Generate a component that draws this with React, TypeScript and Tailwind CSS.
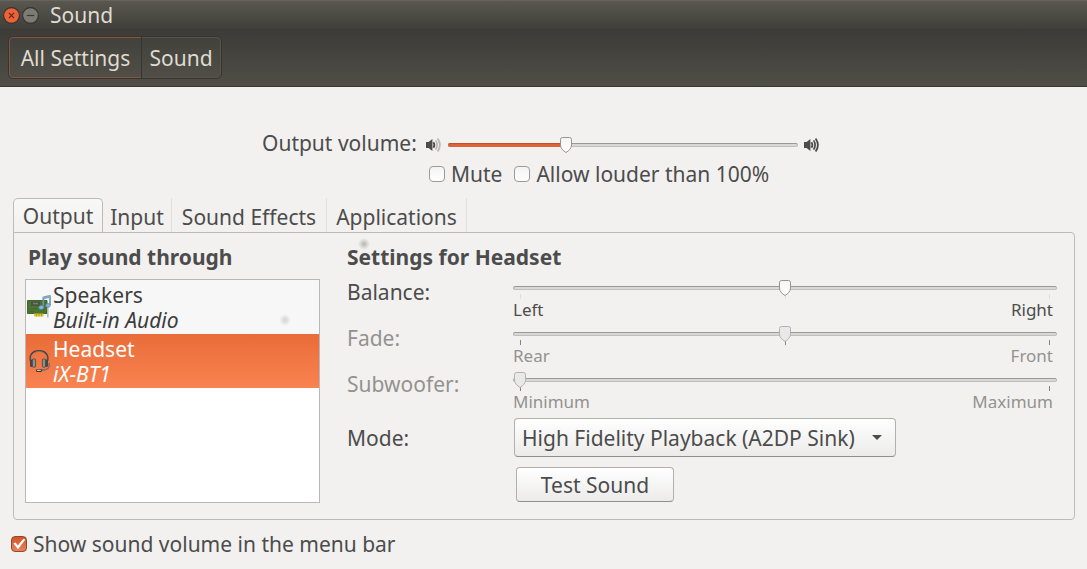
import { useState } from "react";
import type { ReactNode } from "react";

function Thumb({ disabled }: { disabled?: boolean }) {
  return (
    <svg width="14" height="18" viewBox="0 0 14 18" className="block">
      <defs>
        <linearGradient id="thumb-fill" x1="0" y1="0" x2="0" y2="1">
          <stop offset="0" stopColor="#f4f4f4" />
          <stop offset="1" stopColor="#ffffff" />
        </linearGradient>
      </defs>
      <path
        d="M3.5 1.5 H10.5 Q12.5 1.5 12.5 3.5 V9 C12.5 12.5 10 14.5 7 16.5 C4 14.5 1.5 12.5 1.5 9 V3.5 Q1.5 1.5 3.5 1.5 Z"
        fill={disabled ? "#e9e9e9" : "url(#thumb-fill)"}
        stroke={disabled ? "#b2b2b0" : "#939391"}
        strokeWidth="1"
      />
    </svg>
  );
}

type SliderProps = {
  label: string;
  initial: number;
  disabled?: boolean;
  filled?: boolean;
  ticks?: "light" | "dark";
  centerTick?: boolean;
};

function Slider({ label, initial, disabled, filled, ticks, centerTick }: SliderProps) {
  const [value, setValue] = useState(initial);
  const tick = ticks === "dark" ? "bg-[#85857f]" : "bg-[#dededc]";
  return (
    <div className="relative flex h-5 w-full items-center">
      <div className="h-[4px] w-full overflow-hidden rounded-full border border-t-[#999997] border-r-[#b5b5b3] border-b-[#bfbfbd] border-l-[#aaaaa8] bg-[#d8d8d6]" />
      <div className="absolute inset-x-[7px] inset-y-0">
        {filled && (
          <div
            className="absolute top-2 -left-[7px] h-[4px] rounded-l-full border-y border-t-[#bc5330] border-b-[#d16a45] bg-[#e2622f]"
            style={{ width: `calc(${value}% + 7px)` }}
          />
        )}
        {ticks && (
          <>
            <div className={`absolute top-4 left-0 h-[5px] w-px ${tick}`} />
            {centerTick && <div className={`absolute top-4 left-1/2 h-[5px] w-px ${tick}`} />}
            <div className={`absolute top-4 right-0 h-[5px] w-px ${tick}`} />
          </>
        )}
        <div className="absolute top-px -translate-x-1/2" style={{ left: `${value}%` }}>
          <Thumb disabled={disabled} />
        </div>
      </div>
      <input
        type="range"
        aria-label={label}
        value={value}
        disabled={disabled}
        onChange={(e) => setValue(Number(e.target.value))}
        className="absolute inset-0 h-full w-full opacity-0"
      />
    </div>
  );
}

function CheckBox({ label, initial = false }: { label: string; initial?: boolean }) {
  const [on, setOn] = useState(initial);
  return (
    <label className="flex h-7 items-center gap-1.5">
      <span className="relative flex size-4">
        <input
          type="checkbox"
          checked={on}
          onChange={(e) => setOn(e.target.checked)}
          className="size-4 appearance-none rounded-[4px] border border-[#9b9b99] bg-linear-to-b from-[#f3f3f3] to-white checked:border-[#8f4a33] checked:from-[#d35424] checked:to-[#ea8157]"
        />
        {on && (
          <svg viewBox="0 0 16 16" className="pointer-events-none absolute inset-0 size-4">
            <path d="M2.4 7.6 L4.6 6.4 L6.8 9.6 L12.4 2.8 L14.4 3.6 L7 13.2 Z" fill="#fff" />
          </svg>
        )}
      </span>
      <span>{label}</span>
    </label>
  );
}

function VolumeIcon({ faint }: { faint?: boolean }) {
  const far = faint ? "#b9b9b7" : "#4c4c4c";
  return (
    <svg width="16" height="16" viewBox="0 0 16 16" fill="none" strokeLinecap="butt">
      <path d="M0 5 H2.6 L6.4 2 V14 L2.6 11 H0 Z" fill="#4c4c4c" />
      <path d="M7.4 5.2 Q9.4 8 7.4 10.8" stroke="#4c4c4c" strokeWidth="1.8" />
      <path d="M9.6 3.4 Q12.6 8 9.6 12.6" stroke={far} strokeWidth="1.7" />
      <path d="M11.6 1.4 Q16.2 8 11.6 14.6" stroke={far} strokeWidth="1.8" />
    </svg>
  );
}

function SoundCardIcon() {
  return (
    <svg width="24" height="24" viewBox="0 0 24 24">
      <path d="M.5 5.5 H20 V18.5 H.5 Z" fill="#4a742f" stroke="#41662a" />
      <rect x="4" y="6.5" width="9" height="4.5" fill="#4b5345" />
      <rect x="6" y="7.8" width="5" height="1.5" fill="#777d70" />
      <path d="M3 14 H10 M3 16.5 H7 M13 14.5 H18" stroke="#416a2a" />
      <path d="M7 18.5 H16.5 V21.5 H7 Z" fill="#d5c92f" />
      <path d="M9.5 18.5 V21.5 M12 18.5 V21.5 M14.5 18.5 V21.5" stroke="#97871d" strokeWidth=".6" />
      <path d="M20.8 9 V22.5" stroke="#b4b8b5" strokeWidth="1.5" />
      <path d="M16.3 12 V2.4 Q19.5 .8 23 1 V10" fill="none" stroke="#6795b4" strokeWidth="1.6" />
      <path d="M16.3 3.4 Q19.5 1.6 23 2" fill="none" stroke="#80aac6" strokeWidth="2.4" />
      <ellipse cx="14.3" cy="12.4" rx="2.5" ry="2" fill="#8ab6d2" stroke="#5683a3" strokeWidth=".7" />
      <ellipse cx="21" cy="10.4" rx="2.3" ry="1.9" fill="#8ab6d2" stroke="#5683a3" strokeWidth=".7" />
    </svg>
  );
}

function HeadsetIcon() {
  return (
    <svg width="24" height="24" viewBox="0 0 24 24" fill="none">
      <path d="M4 13 C1.4 6 6 1.8 12 1.8 S22.6 6 20 13" stroke="#45413e" strokeWidth="1.7" />
      <path d="M4.5 12 C2.6 6.2 7 2.5 12 2.5 S21.4 6.2 19.5 12" stroke="#a3978e" strokeWidth=".6" />
      <rect x="3" y="10.5" width="2.6" height="7.5" rx="1.3" fill="#4a4644" />
      <rect x="5.4" y="10" width="3.2" height="8.2" rx="1" fill="#8d918e" stroke="#45413e" strokeWidth=".8" />
      <rect x="15.4" y="10" width="3.2" height="8.2" rx="1" fill="#8d918e" stroke="#45413e" strokeWidth=".8" />
      <rect x="18.4" y="10.5" width="2.6" height="7.5" rx="1.3" fill="#4a4644" />
      <path d="M22 14 Q23.4 20.4 17 21 H13" stroke="#746a63" strokeWidth="1.3" />
      <path d="M10.2 21.6 H13.8" stroke="#3a3836" strokeWidth="2.6" strokeLinecap="round" />
      <path d="M10.4 21.4 H13.4" stroke="#c1c5c1" strokeWidth="1.1" strokeLinecap="round" />
    </svg>
  );
}

function Device({ name, detail, icon, selected, onSelect }: { name: string; detail: string; icon: ReactNode; selected: boolean; onSelect: () => void }) {
  return (
    <button
      type="button"
      aria-pressed={selected}
      onClick={onSelect}
      className={`flex h-[54px] w-full items-center gap-[2px] pl-px text-left ${selected ? "bg-linear-to-b from-[#e96c38] to-[#f98351] text-white" : "bg-[#f7f7f7] text-[#3c3c3c]"}`}
    >
      {icon}
      <span className="flex flex-col pt-0.5 leading-[25px]">
        <span>{name}</span>
        <span className="italic">{detail}</span>
      </span>
    </button>
  );
}

function SettingRow({ label, low, high, initial, disabled, centerTick }: { label: string; low: string; high: string; initial: number; disabled?: boolean; centerTick?: boolean }) {
  return (
    <div className={`grid grid-cols-[166px_1fr] ${disabled ? "text-[#94928f]" : ""}`}>
      <span className="leading-7">{label}:</span>
      <div className="flex flex-col gap-px">
        <Slider label={label} initial={initial} disabled={disabled} ticks={disabled ? "dark" : "light"} centerTick={centerTick} />
        <div className="flex justify-between pr-1 text-[17px] leading-[21px]">
          <span>{low}</span>
          <span>{high}</span>
        </div>
      </div>
    </div>
  );
}

const tabs = ["Output", "Input", "Sound Effects", "Applications"];
const tabWidths = ["w-[90px]", "w-[69px]", "w-[155px]", "w-[140px]"];

export default function App() {
  const [tab, setTab] = useState("Output");
  const [device, setDevice] = useState("Headset");
  return (
    <div className="min-h-screen bg-[#f2f1f0] font-['Noto_Sans',sans-serif] text-[21px] leading-7 text-[#4c4c4c]">
      <header className="border-b border-[#3a3833] text-[#dfdbd2]">
        <div className="flex h-[29px] items-center border-t border-[#66645b] bg-linear-to-b from-[#59574f] to-[#403f3a] pl-[3px]">
          <button type="button" aria-label="Close" className="size-[17px] rounded-full">
            <svg viewBox="0 0 16 16" className="size-[17px]">
              <circle cx="8" cy="8" r="7.4" fill="#ee6237" stroke="#35332f" />
              <path d="M5.6 5.6 L10.4 10.4 M10.4 5.6 L5.6 10.4" stroke="#57281a" strokeWidth="1.1" />
            </svg>
          </button>
          <button type="button" aria-label="Minimize" className="ml-[2px] size-[17px] rounded-full">
            <svg viewBox="0 0 16 16" className="size-[17px]">
              <circle cx="8" cy="8" r="7.4" fill="#7d7b73" stroke="#35332f" />
              <path d="M4.5 8 H11.5" stroke="#3b3935" strokeWidth="1.1" />
            </svg>
          </button>
          <h1 className="ml-[11px]">Sound</h1>
        </div>
        <nav className="flex h-[57px] bg-linear-to-b from-[#3c3b37] to-[#504e47] px-[9px] pt-2">
          <button type="button" className="h-[41px] w-[133px] rounded-l-[4px] border border-[#85553f] border-r-[#5d5b54] bg-linear-to-b from-[#42413b] to-[#504e47] outline-1 outline-[#37352f]">
            All Settings
          </button>
          <button type="button" className="h-[41px] w-[79px] rounded-r-[4px] border border-l-0 border-[#55534c] bg-linear-to-b from-[#42413b] to-[#504e47] outline-1 outline-[#37352f]">
            Sound
          </button>
        </nav>
      </header>

      <main className="pt-[43px] pr-3 pl-[13px]">
        <section className="flex flex-col items-center pr-[6px]">
          <div className="flex h-[30px] items-center">
            <span className="w-[164px] pb-1">Output volume:</span>
            <VolumeIcon faint />
            <div className="mx-[6px] w-[350px]">
              <Slider label="Output volume" initial={33} filled />
            </div>
            <VolumeIcon />
          </div>
          <div className="flex w-[558px] gap-3 pl-[167px]">
            <CheckBox label="Mute" />
            <CheckBox label="Allow louder than 100%" />
          </div>
        </section>

        <div role="tablist" className="relative mt-[10px] -mb-px flex h-[35px]">
          {tabs.map((name, i) => (
            <button
              key={name}
              type="button"
              role="tab"
              aria-selected={tab === name}
              onClick={() => setTab(name)}
              className={`${tabWidths[i]} border-r text-center ${tab === name ? "rounded-t-[5px] border border-[#bdbbb9] border-b-[#f2f1f0] bg-linear-to-b from-[#f8f8f7] to-[#f2f1f0]" : "border-r-[#e0dfdd] border-b border-b-[#bdbbb9] pt-[3px]"}`}
            >
              {name}
            </button>
          ))}
        </div>

        <section className="relative grid grid-cols-[295px_1fr] gap-[27px] rounded-b-[4px] rounded-tr-[4px] border border-[#bdbbb9] pt-3 pr-[17px] pb-4 pl-[11px]">
          <span className="absolute top-[5px] left-[344px] size-3 rounded-full bg-radial from-[#b5b5b5] to-transparent to-70%" />
          <div>
            <h2 className="pl-[3px] leading-6 font-bold">Play sound through</h2>
            <div className="relative mt-[10px] h-[224px] border border-[#bab8b6] bg-white">
              <Device name="Speakers" detail="Built-in Audio" icon={<SoundCardIcon />} selected={device === "Speakers"} onSelect={() => setDevice("Speakers")} />
              <Device name="Headset" detail="iX-BT1" icon={<HeadsetIcon />} selected={device === "Headset"} onSelect={() => setDevice("Headset")} />
              <span className="absolute top-[34px] left-[253px] size-3 rounded-full bg-radial from-[#d2d2d2] to-transparent to-70%" />
            </div>
          </div>
          <div>
            <h2 className="leading-6 font-bold">Settings for Headset</h2>
            <div className="mt-[9px] flex flex-col gap-1">
              <SettingRow label="Balance" low="Left" high="Right" initial={50} centerTick />
              <SettingRow label="Fade" low="Rear" high="Front" initial={50} disabled centerTick />
              <SettingRow label="Subwoofer" low="Minimum" high="Maximum" initial={0} disabled />
            </div>
            <div className="mt-[6px] grid grid-cols-[167px_1fr] items-center">
              <label htmlFor="mode">Mode:</label>
              <div className="relative w-[382px]">
                <select id="mode" className="block h-[39px] w-full appearance-none rounded-[4px] border border-[#b0b0ae] border-b-[#8f8f8d] bg-linear-to-b from-white to-[#ecebea] pr-7 pl-[7px]">
                  <option>High Fidelity Playback (A2DP Sink)</option>
                </select>
                <svg viewBox="0 0 10 6" className="pointer-events-none absolute top-[17px] right-[14px] h-[5px] w-[10px]" preserveAspectRatio="none">
                  <path d="M0 0 H10 L5 6 Z" fill="#4c4c4c" />
                </svg>
              </div>
            </div>
            <button type="button" className="mt-[10px] ml-[169px] block h-[35px] w-[158px] rounded-[4px] border border-[#b0b0ae] border-b-[#8f8f8d] bg-linear-to-b from-white to-[#ecebea]">
              Test Sound
            </button>
          </div>
        </section>
      </main>

      <footer className="mt-[10px] flex pl-[11px]">
        <CheckBox label="Show sound volume in the menu bar" initial />
      </footer>
    </div>
  );
}
